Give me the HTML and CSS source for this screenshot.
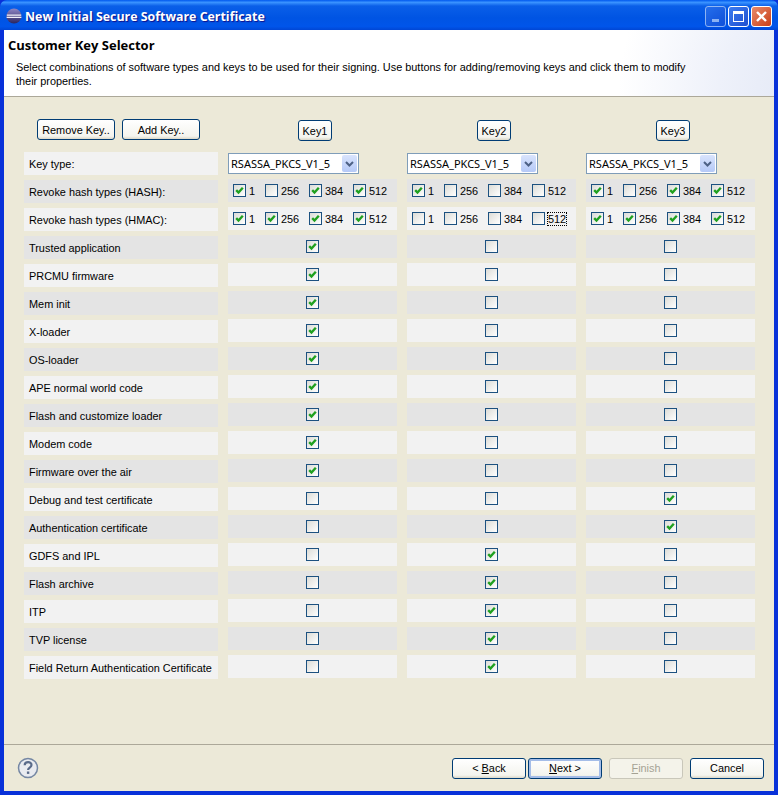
FILE: index.html
```html
<!DOCTYPE html>
<html lang="en">
<head>
  <meta charset="UTF-8" />
  <title>New Initial Secure Software Certificate</title>
  <link rel="stylesheet" href="styles.css">
</head>
<body>
  <svg class="defs" width="0" height="0">
    <symbol id="tick" viewBox="0 0 13 13">
      <path d="M3.200 6.200L5.500 8.500L9.800 3.800" fill="none" stroke="#1fa01f" stroke-width="2.400"/>
    </symbol>
    <linearGradient id="sphere" x1="0" y1="0" x2="0" y2="1">
      <stop offset="0" stop-color="#8f86c4"/>
      <stop offset="1" stop-color="#2a2560"/>
    </linearGradient>
  </svg>

  <div class="window">
    <div class="titlebar">
      <svg class="app-icon" width="16" height="16" viewBox="0 0 16 16">
        <circle cx="8" cy="8" r="7.500" fill="url(#sphere)"/>
        <path d="M.8 6.500h14.400v1.200H.8zM.6 8.800h14.800v1.200H.6z" fill="#f0eff8"/>
      </svg>
      <span class="title">New Initial Secure Software Certificate</span>
      <div class="win-btns">
        <span class="win-btn min"><i></i></span>
        <span class="win-btn max"><i></i></span>
        <span class="win-btn close">
          <svg width="13" height="13" viewBox="0 0 13 13"><path d="M2 2l9 9M11 2l-9 9" stroke="#fff" stroke-width="2.400" fill="none"/></svg>
        </span>
      </div>
    </div>

    <div class="client">
      <div class="banner">
        <h1>Customer Key Selector</h1>
        <p>Select combinations of software types and keys to be used for their signing. Use buttons for adding/removing keys and click them to modify<br>their properties.</p>
      </div>

      <div class="page">
        <div class="table">
          <div class="top-btns">
            <button class="btn wide">Remove Key..</button>
            <button class="btn wide">Add Key..</button>
          </div>
          <div class="key-head"><button class="btn key">Key1</button></div>
          <div class="key-head"><button class="btn key">Key2</button></div>
          <div class="key-head"><button class="btn key">Key3</button></div>

          <div class="label light">Key type:</div>
          <div class="combo"><span>RSASSA_PKCS_V1_5</span><b class="arrow"><svg width="9" height="6" viewBox="0 0 9 6"><path d="M1 1l3.500 3.500L8 1" stroke="#4d6185" stroke-width="2" fill="none"/></svg></b></div>
          <div class="combo"><span>RSASSA_PKCS_V1_5</span><b class="arrow"><svg width="9" height="6" viewBox="0 0 9 6"><path d="M1 1l3.500 3.500L8 1" stroke="#4d6185" stroke-width="2" fill="none"/></svg></b></div>
          <div class="combo"><span>RSASSA_PKCS_V1_5</span><b class="arrow"><svg width="9" height="6" viewBox="0 0 9 6"><path d="M1 1l3.500 3.500L8 1" stroke="#4d6185" stroke-width="2" fill="none"/></svg></b></div>

          <div class="label dark">Revoke hash types (HASH):</div>
          <div class="cell dark hash">
            <label><span class="cb"><svg><use href="#tick"/></svg></span>1</label>
            <label><span class="cb"></span>256</label>
            <label><span class="cb"><svg><use href="#tick"/></svg></span>384</label>
            <label><span class="cb"><svg><use href="#tick"/></svg></span>512</label>
          </div>
          <div class="cell dark hash">
            <label><span class="cb"><svg><use href="#tick"/></svg></span>1</label>
            <label><span class="cb"></span>256</label>
            <label><span class="cb"></span>384</label>
            <label><span class="cb"></span>512</label>
          </div>
          <div class="cell dark hash">
            <label><span class="cb"><svg><use href="#tick"/></svg></span>1</label>
            <label><span class="cb"></span>256</label>
            <label><span class="cb"><svg><use href="#tick"/></svg></span>384</label>
            <label><span class="cb"><svg><use href="#tick"/></svg></span>512</label>
          </div>

          <div class="label light">Revoke hash types (HMAC):</div>
          <div class="cell light hash">
            <label><span class="cb"><svg><use href="#tick"/></svg></span>1</label>
            <label><span class="cb"><svg><use href="#tick"/></svg></span>256</label>
            <label><span class="cb"><svg><use href="#tick"/></svg></span>384</label>
            <label><span class="cb"><svg><use href="#tick"/></svg></span>512</label>
          </div>
          <div class="cell light hash">
            <label><span class="cb"></span>1</label>
            <label><span class="cb"></span>256</label>
            <label><span class="cb"></span>384</label>
            <label><span class="cb"></span><em class="focus">512</em></label>
          </div>
          <div class="cell light hash">
            <label><span class="cb"><svg><use href="#tick"/></svg></span>1</label>
            <label><span class="cb"><svg><use href="#tick"/></svg></span>256</label>
            <label><span class="cb"><svg><use href="#tick"/></svg></span>384</label>
            <label><span class="cb"><svg><use href="#tick"/></svg></span>512</label>
          </div>

          <div class="label dark">Trusted application</div>
          <div class="cell dark"><span class="cb"><svg><use href="#tick"/></svg></span></div>
          <div class="cell dark"><span class="cb"></span></div>
          <div class="cell dark"><span class="cb"></span></div>

          <div class="label light">PRCMU firmware</div>
          <div class="cell light"><span class="cb"><svg><use href="#tick"/></svg></span></div>
          <div class="cell light"><span class="cb"></span></div>
          <div class="cell light"><span class="cb"></span></div>

          <div class="label dark">Mem init</div>
          <div class="cell dark"><span class="cb"><svg><use href="#tick"/></svg></span></div>
          <div class="cell dark"><span class="cb"></span></div>
          <div class="cell dark"><span class="cb"></span></div>

          <div class="label light">X-loader</div>
          <div class="cell light"><span class="cb"><svg><use href="#tick"/></svg></span></div>
          <div class="cell light"><span class="cb"></span></div>
          <div class="cell light"><span class="cb"></span></div>

          <div class="label dark">OS-loader</div>
          <div class="cell dark"><span class="cb"><svg><use href="#tick"/></svg></span></div>
          <div class="cell dark"><span class="cb"></span></div>
          <div class="cell dark"><span class="cb"></span></div>

          <div class="label light">APE normal world code</div>
          <div class="cell light"><span class="cb"><svg><use href="#tick"/></svg></span></div>
          <div class="cell light"><span class="cb"></span></div>
          <div class="cell light"><span class="cb"></span></div>

          <div class="label dark">Flash and customize loader</div>
          <div class="cell dark"><span class="cb"><svg><use href="#tick"/></svg></span></div>
          <div class="cell dark"><span class="cb"></span></div>
          <div class="cell dark"><span class="cb"></span></div>

          <div class="label light">Modem code</div>
          <div class="cell light"><span class="cb"><svg><use href="#tick"/></svg></span></div>
          <div class="cell light"><span class="cb"></span></div>
          <div class="cell light"><span class="cb"></span></div>

          <div class="label dark">Firmware over the air</div>
          <div class="cell dark"><span class="cb"><svg><use href="#tick"/></svg></span></div>
          <div class="cell dark"><span class="cb"></span></div>
          <div class="cell dark"><span class="cb"></span></div>

          <div class="label light">Debug and test certificate</div>
          <div class="cell light"><span class="cb"></span></div>
          <div class="cell light"><span class="cb"></span></div>
          <div class="cell light"><span class="cb"><svg><use href="#tick"/></svg></span></div>

          <div class="label dark">Authentication certificate</div>
          <div class="cell dark"><span class="cb"></span></div>
          <div class="cell dark"><span class="cb"></span></div>
          <div class="cell dark"><span class="cb"><svg><use href="#tick"/></svg></span></div>

          <div class="label light">GDFS and IPL</div>
          <div class="cell light"><span class="cb"></span></div>
          <div class="cell light"><span class="cb"><svg><use href="#tick"/></svg></span></div>
          <div class="cell light"><span class="cb"></span></div>

          <div class="label dark">Flash archive</div>
          <div class="cell dark"><span class="cb"></span></div>
          <div class="cell dark"><span class="cb"><svg><use href="#tick"/></svg></span></div>
          <div class="cell dark"><span class="cb"></span></div>

          <div class="label light">ITP</div>
          <div class="cell light"><span class="cb"></span></div>
          <div class="cell light"><span class="cb"><svg><use href="#tick"/></svg></span></div>
          <div class="cell light"><span class="cb"></span></div>

          <div class="label dark">TVP license</div>
          <div class="cell dark"><span class="cb"></span></div>
          <div class="cell dark"><span class="cb"><svg><use href="#tick"/></svg></span></div>
          <div class="cell dark"><span class="cb"></span></div>

          <div class="label light">Field Return Authentication Certificate</div>
          <div class="cell light"><span class="cb"></span></div>
          <div class="cell light"><span class="cb"><svg><use href="#tick"/></svg></span></div>
          <div class="cell light"><span class="cb"></span></div>
        </div>
      </div>

      <div class="footer">
        <svg class="help" width="22" height="22" viewBox="0 0 22 22">
          <circle cx="11" cy="11" r="9.500" fill="#e9ebf0" stroke="#7587a3" stroke-width="1.500"/>
          <path d="M7.700 8.300c0-4.300 6.800-4.300 6.800-.2 0 2.700-3.400 2.500-3.400 5" fill="none" stroke="#5a6b8a" stroke-width="2.200"/>
          <rect x="9.900" y="14.500" width="2.400" height="2.400" fill="#5a6b8a"/>
        </svg>
        <div class="nav-btns">
          <button class="btn nav"><span>&lt; <u>B</u>ack</span></button>
          <button class="btn nav default"><span><u>N</u>ext &gt;</span></button>
          <button class="btn nav disabled"><span><u>F</u>inish</span></button>
          <button class="btn nav"><span>Cancel</span></button>
        </div>
      </div>
    </div>
  </div>
</body>
</html>
```

FILE: styles.css
```css
* { box-sizing: border-box; }

html, body {
  margin: 0;
  padding: 0;
  height: 100%;
  overflow: hidden;
}

body {
  font-family: "Liberation Sans", Arial, sans-serif;
  font-size: 10.9px;
  color: #000;
  background: #0831d9;
}

.defs {
  display: block;
  height: 0;
}

.window {
  display: flex;
  flex-direction: column;
  height: 795px;
  background: #0831d9;
  border-radius: 7px 7px 0 0;
  overflow: hidden;
}

/* title bar */
.titlebar {
  display: flex;
  align-items: center;
  height: 30px;
  padding: 2px 6px 0 6px;
  background: linear-gradient(#0058ee 0%, #3a93ff 8%, #0a5fe8 20%, #0054e3 60%, #0055ea 88%, #0046d5 100%);
}

.app-icon { margin-right: 3px; }

.title {
  flex: 1;
  font-family: "Open Sans", Arial, sans-serif;
  font-size: 12.4px;
  font-weight: 700;
  color: #fff;
  text-shadow: 1px 1px 1px #0f1089;
}

.win-btns {
  display: flex;
  gap: 2px;
}

.win-btn {
  display: flex;
  width: 21px;
  height: 21px;
  border: 1px solid #fff;
  border-radius: 3px;
  align-items: center;
  justify-content: center;
  background: linear-gradient(135deg, #3c7cf0, #1f4fd0);
}

.win-btn.min {
  opacity: .55;
  align-items: flex-end;
  padding-bottom: 4px;
}

.win-btn.min i {
  display: block;
  width: 7px;
  height: 3px;
  background: #fff;
}

.win-btn.max i {
  display: block;
  width: 11px;
  height: 11px;
  border: 1px solid #fff;
  border-top-width: 3px;
}

.win-btn.close { background: linear-gradient(135deg, #e88a6a, #c93f18); }

/* dialog body */
.client {
  flex: 1;
  display: flex;
  flex-direction: column;
  margin: 0 4px 4px;
  background: #ece9d8;
}

.banner {
  height: 67px;
  padding: 8px 5px 0 4px;
  background: radial-gradient(circle at 108% 100%, #dfe5f4 0%, #eef1fa 14%, #fff 26%);
  border-bottom: 1px solid #aca899;
}

.banner h1 {
  margin: 0;
  font-family: "Open Sans", Arial, sans-serif;
  font-size: 13px;
  font-weight: 700;
  line-height: 15px;
}

.banner p {
  margin: 7px 0 0 8px;
  line-height: 14px;
}

.page { flex: 1; }

.table {
  display: grid;
  grid-template-columns: 194px 169px 169px 169px;
  grid-template-rows: 27px repeat(19, 23px);
  column-gap: 10px;
  row-gap: 5px;
  padding: 22px 0 0 20px;
}

.top-btns {
  display: flex;
  gap: 7px;
  padding-left: 13px;
}

.key-head {
  display: flex;
  justify-content: center;
  padding: 1px 0 0 5px;
}

.light { background: #f2f2f2; }
.dark { background: #e4e4e4; }

.label {
  display: flex;
  align-items: center;
  padding-left: 5px;
  white-space: nowrap;
  position: relative;
  top: 1px;
}

.cell {
  display: flex;
  align-items: center;
  justify-content: center;
}

.cell.hash {
  display: grid;
  grid-template-columns: 32px 44px 44px 44px;
  padding-left: 5px;
}

.cell label {
  display: flex;
  align-items: center;
  gap: 3px;
}

.focus {
  font-style: normal;
  outline: 1px dotted #000;
  outline-offset: 0;
}

/* check boxes */
.cb {
  flex: none;
  display: block;
  width: 13px;
  height: 13px;
  border: 1px solid #1c5180;
  background: linear-gradient(135deg, #dcdcd7, #fff);
  position: relative;
}

.cb svg {
  display: block;
  width: 13px;
  height: 13px;
  margin: -1px;
}

/* combo */
.combo {
  display: flex;
  align-items: center;
  justify-content: space-between;
  width: 131px;
  height: 21px;
  margin-top: 2px;
  padding: 1px 1px 1px 2px;
  font-family: "Noto Sans", Arial, sans-serif;
  font-size: 11px;
  background: #fff;
  border: 1px solid #7f9db9;
}

.arrow {
  display: flex;
  align-items: center;
  justify-content: center;
  width: 15px;
  height: 17px;
  border-radius: 2px;
  background: linear-gradient(#d9e4fd, #b5c9f7);
}

/* buttons */
.btn {
  font: inherit;
  color: #000;
  padding: 0;
  height: 21px;
  border: 1px solid #003c74;
  border-radius: 3px;
  background: linear-gradient(#fff, #f4f4ee 85%, #dcd8c8);
}

.btn.wide { width: 78px; }
.btn.key { width: 34px; }

/* footer */
.footer {
  height: 47px;
  display: flex;
  align-items: center;
  justify-content: space-between;
  padding: 0 10px 0 13px;
  border-top: 1px solid #aca899;
}

.nav-btns {
  display: flex;
  gap: 2px;
}

.btn.nav {
  width: 74px;
  height: 21px;
}

.btn.default { box-shadow: inset 0 0 0 2px #a5bde8; }

.btn.disabled {
  margin: 0 5px;
  color: #a5a294;
  border-color: #c9c7ba;
  background: #f4f3ea;
}
```
